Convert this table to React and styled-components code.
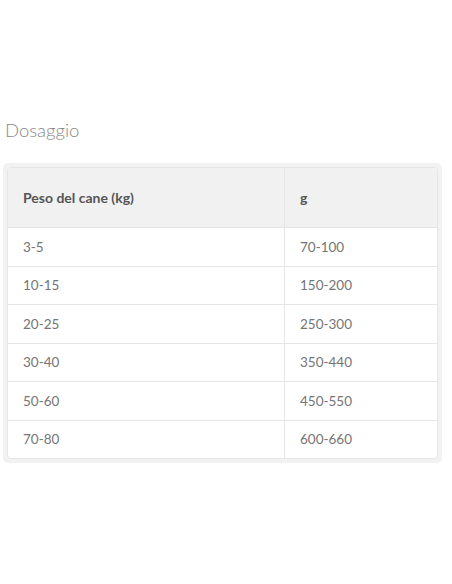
import React from 'react';
import styled, { createGlobalStyle } from 'styled-components';

const GlobalStyle = createGlobalStyle`
  html, body {
    margin: 0;
    padding: 0;
    background: #ffffff;
  }
  body {
    font-family: Lato, "Liberation Sans", sans-serif;
  }
`;

const Page = styled.div`
  width: 452px;
  height: 584px;
  padding: 116px 10px 0 3px;
  box-sizing: border-box;
`;

const Title = styled.h2`
  margin: 0 0 19px 2px;
  font-size: 18.5px;
  font-weight: 300;
  line-height: 28px;
  color: #888888;
`;

const Frame = styled.div`
  width: 439px;
  box-sizing: border-box;
  border: 4px solid #f2f2f2;
  border-radius: 5px;
  background: #f2f2f2;
`;

const Table = styled.table`
  width: 100%;
  border-collapse: separate;
  border-spacing: 0;
  background: #ffffff;
  border: 1px solid #e6e6e6;
  border-radius: 4px;
  overflow: hidden;
`;

const HeadCell = styled.th`
  height: 59px;
  padding: 0 15px;
  text-align: left;
  font-size: 14px;
  font-weight: 700;
  color: #555555;
  background: #f1f1f1;
  border-bottom: 1px solid #e6e6e6;
  width: ${(p) => (p.$first ? '246px' : 'auto')};
  border-right: ${(p) => (p.$first ? '1px solid #e6e6e6' : 'none')};
`;

const Cell = styled.td`
  height: 37.5px;
  padding: 0 15px;
  font-size: 13.5px;
  color: #757575;
  border-bottom: ${(p) => (p.$last ? 'none' : '1px solid #e6e6e6')};
  border-right: ${(p) => (p.$first ? '1px solid #e6e6e6' : 'none')};
`;

const rows = [
  ['3-5', '70-100'],
  ['10-15', '150-200'],
  ['20-25', '250-300'],
  ['30-40', '350-440'],
  ['50-60', '450-550'],
  ['70-80', '600-660'],
];

export default function App() {
  return (
    <Page>
      <GlobalStyle />
      <Title>Dosaggio</Title>
      <Frame>
        <Table>
          <thead>
            <tr>
              <HeadCell $first>Peso del cane (kg)</HeadCell>
              <HeadCell>g</HeadCell>
            </tr>
          </thead>
          <tbody>
            {rows.map(([kg, g], i) => (
              <tr key={kg}>
                <Cell $first $last={i === rows.length - 1}>{kg}</Cell>
                <Cell $last={i === rows.length - 1}>{g}</Cell>
              </tr>
            ))}
          </tbody>
        </Table>
      </Frame>
    </Page>
  );
}
